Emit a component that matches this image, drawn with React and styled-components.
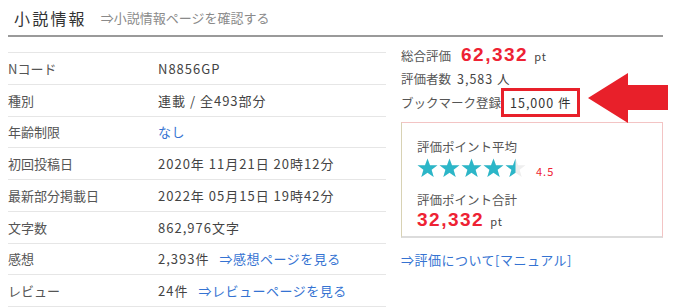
import React from 'react';
import styled, { createGlobalStyle } from 'styled-components';

const GlobalStyle = createGlobalStyle`
  body {
    margin: 0;
    background: #fff;
    font-family: "Noto Sans CJK JP", "Noto Sans", sans-serif;
    color: #444;
  }
`;

const Page = styled.div`
  width: 680px;
  height: 308px;
  padding: 0 17px 0 8px;
  box-sizing: border-box;
  overflow: hidden;
`;

const Header = styled.div`
  display: flex;
  align-items: center;
  height: 35px;
  padding-left: 6px;
  border-bottom: 2px solid #9a9a9a;
`;

const Title = styled.h2`
  margin: 0;
  font-size: 16px;
  font-weight: normal;
  letter-spacing: 2.2px;
  color: #333;
`;

const HeaderLink = styled.a`
  margin-left: 14px;
  font-size: 13px;
  color: #8a8a8a;
  text-decoration: none;
`;

const Body = styled.div`
  display: flex;
  gap: 15px;
`;

const Table = styled.div`
  width: 378px;
  margin-top: 15px;
  border-top: 1px solid #e6e6e6;
`;

const Row = styled.div`
  display: flex;
  align-items: center;
  height: 30.75px;
  border-bottom: 1px solid #e6e6e6;
  font-size: 13px;
`;

const Label = styled.div`
  width: 150px;
  color: #555;
`;

const Value = styled.div`
  color: #444;
  letter-spacing: 1px;
`;

const Link = styled.a`
  color: #3573d2;
  text-decoration: none;
  margin-left: ${p => p.$gap || 0}px;
  letter-spacing: 0.5px;
`;

const Side = styled.div`
  position: relative;
  width: 262px;
  padding-top: 7px;
`;

const StatLine = styled.div`
  display: flex;
  align-items: ${p => p.$center ? 'center' : 'baseline'};
  height: ${p => p.$h}px;
  font-size: 12.5px;
  color: #555;
`;

const StatLabel = styled.span`
  margin-right: ${p => p.$gap ?? 6}px;
`;

const BigRed = styled.span`
  font-size: 19px;
  font-weight: bold;
  color: #ee2233;
  letter-spacing: 1.5px;
  font-family: "Liberation Sans", Arial, sans-serif;
`;

const Unit = styled.span`
  font-size: 11px;
  color: #444;
  margin-left: 6px;
  letter-spacing: 1px;
`;

const Num = styled.span`
  letter-spacing: 1px;
  color: #444;
`;

const Boxed = styled.span`
  display: inline-flex;
  align-items: center;
  height: 23px;
  padding: 0 6px 0 6px;
  border: 3px solid #e8202a;
  color: #333;
  letter-spacing: 1px;
`;

const Arrow = styled.svg`
  position: absolute;
  left: 186px;
  top: 35px;
`;

const ScoreBox = styled.div`
  margin-top: 8px;
  height: 116px;
  padding: 15px 15px 0;
  box-sizing: border-box;
  border: 1px solid #f3c4c4;
  border-left-color: #d8d2b4;
  border-bottom: 2px solid #dcdcdc;
`;

const BoxLabel = styled.div`
  font-size: 12.5px;
  color: #555;
  line-height: 18px;
  margin-top: ${p => p.$top || 0}px;
`;

const Stars = styled.div`
  display: flex;
  align-items: center;
  gap: 1px;
  height: 24px;
`;

const Small = styled.span`
  margin-left: 9px;
  margin-top: 6px;
  font-size: 11px;
  color: #ee2233;
  letter-spacing: 1px;
`;

const Total = styled.div`
  display: flex;
  align-items: baseline;
  line-height: 22px;
`;

const Manual = styled.a`
  display: block;
  margin-top: 12px;
  font-size: 13px;
  color: #3573d2;
  text-decoration: none;
  letter-spacing: 0.5px;
`;

const STAR = 'M10.5 0.5 L13 7.2 L20.5 7.3 L14.6 11.8 L16.7 19 L10.5 14.8 L4.3 19 L6.4 11.8 L0.5 7.3 L8 7.2 Z';

const Star = ({ fill }) => (
  <svg width="21" height="20" viewBox="0 0 21 20">
    <defs>
      <clipPath id={`c${fill}`}>
        <rect x="0" y="0" width={21 * fill} height="20" />
      </clipPath>
    </defs>
    <path d={STAR} fill="#eeeeee" />
    <path d={STAR} fill="#2cb6c8" clipPath={`url(#c${fill})`} />
  </svg>
);

const rows = [
  ['Nコード', <Value>N8856GP</Value>],
  ['種別', <Value>連載 / 全493部分</Value>],
  ['年齢制限', <Link>なし</Link>],
  ['初回投稿日', <Value>2020年 11月21日 20時12分</Value>],
  ['最新部分掲載日', <Value>2022年 05月15日 19時42分</Value>],
  ['文字数', <Value>862,976文字</Value>],
  ['感想', <Value>2,393件<Link $gap={10}>⇒感想ページを見る</Link></Value>],
  ['レビュー', <Value>24件<Link $gap={10}>⇒レビューページを見る</Link></Value>],
];

export default function App() {
  return (
    <Page>
      <GlobalStyle />
      <Header>
        <Title>小説情報</Title>
        <HeaderLink>⇒小説情報ページを確認する</HeaderLink>
      </Header>
      <Body>
        <Table>
          {rows.map(([label, value]) => (
            <Row key={label}>
              <Label>{label}</Label>
              {value}
            </Row>
          ))}
        </Table>
        <Side>
          <StatLine $h={25}>
            <StatLabel $gap={10}>総合評価</StatLabel>
            <BigRed>62,332</BigRed>
            <Unit>pt</Unit>
          </StatLine>
          <StatLine $h={22}>
            <StatLabel>評価者数</StatLabel>
            <Num>3,583 人</Num>
          </StatLine>
          <StatLine $h={23} $center>
            <StatLabel $gap={0}>ブックマーク登録</StatLabel>
            <Boxed>15,000 件</Boxed>
          </StatLine>
          <Arrow width="82" height="52" viewBox="0 0 82 52">
            <path d="M1 26 L41 1 L41 13 L81 13 L81 38 L41 38 L41 51 Z" fill="#e8202a" />
          </Arrow>
          <ScoreBox>
            <BoxLabel>評価ポイント平均</BoxLabel>
            <Stars>
              <Star fill={1} />
              <Star fill={1} />
              <Star fill={1} />
              <Star fill={1} />
              <Star fill={0.5} />
              <Small>4.5</Small>
            </Stars>
            <BoxLabel $top={11}>評価ポイント合計</BoxLabel>
            <Total>
              <BigRed>32,332</BigRed>
              <Unit>pt</Unit>
            </Total>
          </ScoreBox>
          <Manual>⇒評価について[マニュアル]</Manual>
        </Side>
      </Body>
    </Page>
  );
}
